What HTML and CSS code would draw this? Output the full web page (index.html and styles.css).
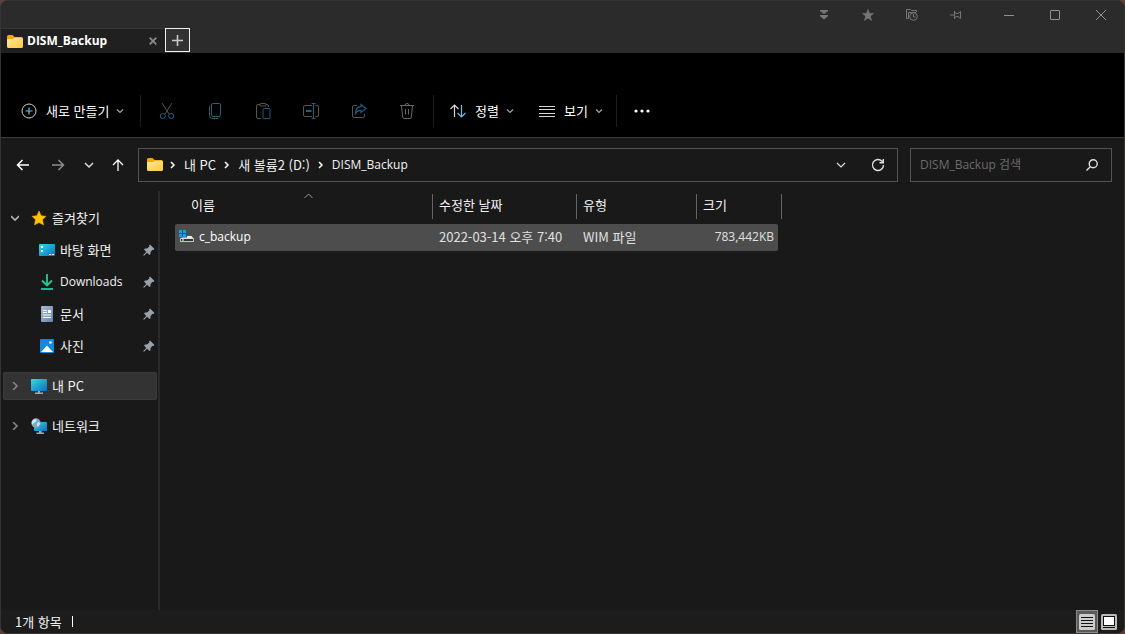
FILE: index.html
```
<!DOCTYPE html>
<html lang="ko">
<head>
<meta charset="utf-8">
<title>DISM_Backup</title>
<link rel="stylesheet" href="styles.css">
</head>
<body>
<svg class="defs" aria-hidden="true">
  <defs>
    <linearGradient id="gFolder" x1="0" y1="0" x2="1" y2="1"><stop offset="0" stop-color="#ffe8a0"/><stop offset="1" stop-color="#ffc93c"/></linearGradient>
    <linearGradient id="gScreen" x1="0" y1="0" x2="1" y2="1"><stop offset="0" stop-color="#35d8e6"/><stop offset="1" stop-color="#0a6fc4"/></linearGradient>
    <linearGradient id="gDoc" x1="0" y1="0" x2="1" y2="1"><stop offset="0" stop-color="#a9bdd4"/><stop offset="1" stop-color="#6484ab"/></linearGradient>
    <symbol id="folder" viewBox="0 0 16 13"><path d="M0 1.5Q0 0 1.5 0H5.5L7.5 2H14.5Q16 2 16 3.500V6H0Z" fill="#f5a800"/><path d="M0 5Q0 4 1 4H6L7.500 2.700H14.500Q16 2.700 16 4.200V11.500Q16 13 14.500 13H1.500Q0 13 0 11.500Z" fill="url(#gFolder)"/></symbol>
    <symbol id="chev" viewBox="0 0 8 8"><path d="M1 2.500L4 5.500L7 2.500" fill="none" stroke="currentColor" stroke-width="1.200"/></symbol>
    <symbol id="pin" viewBox="0 0 12 12"><path d="M7 .5L11.500 5L10.500 6L9.500 5.700L7.500 8V10L6.500 11L4 8.700L1 11.800L.2 11L3.300 8L1 5.500L2 4.500H4L6.400 2.500L6 1.500Z" fill="#9aa3a9"/></symbol>
  </defs>
</svg>
<div class="window">
  <header class="titlebar">
    <div class="tools">
      <button aria-label="더 보기"><svg width="10" height="12" viewBox="0 0 10 12"><path d="M1 1H9V2L5 5L1 2ZM1 6H9V7L5 10.500L1 7Z" fill="#777"/></svg></button>
      <button aria-label="즐겨찾기"><svg width="12" height="12" viewBox="0 0 12 12"><path d="M6 .5L7.500 4.500H11.500L8.300 7L9.500 11.500L6 9L2.500 11.500L3.700 7L.5 4.500H4.500Z" fill="#777" stroke="#777" stroke-width=".6"/></svg></button>
      <button aria-label="최근 폴더"><svg width="12" height="12" viewBox="0 0 12 12" fill="none" stroke="#777"><path d="M2.500 9.500H.5V.5H4.500L5.500 1.500H10.500V3"/><path d="M2.500 3.500H10"/><path d="M2.500 3.500V9.500"/><circle cx="7.500" cy="7.500" r="3.800"/><path d="M7.500 5V8H9.500"/></svg></button>
      <button aria-label="고정"><svg width="12" height="10" viewBox="0 0 12 10" fill="none" stroke="#777"><path d="M0 5H4M4.500 1V9M4.500 2.500L7 3.500H8L10.500 1.500V8.500L8 6.500H7L4.500 7.500"/></svg></button>
    </div>
    <div class="caption">
      <button aria-label="최소화"><svg width="10" height="12" viewBox="0 0 10 12"><path d="M0 6.500H10" stroke="#929292"/></svg></button>
      <button aria-label="최대화"><svg width="10" height="10" viewBox="0 0 10 10"><rect x=".5" y=".5" width="9" height="9" rx=".5" fill="none" stroke="#929292"/></svg></button>
      <button aria-label="닫기"><svg width="10" height="10" viewBox="0 0 10 10"><path d="M0 0L10 10M10 0L0 10" stroke="#929292"/></svg></button>
    </div>
  </header>
  <div class="tabs">
    <div class="tab">
      <svg width="16" height="13"><use href="#folder"/></svg>
      <span class="tab-title latin">DISM_Backup</span>
      <button class="tab-close" aria-label="탭 닫기"><svg width="8" height="8" viewBox="0 0 8 8"><path d="M.7 .7L7.300 7.300M7.300 .7L.7 7.300" stroke="#8c8c8c" stroke-width="1.800"/></svg></button>
    </div>
    <button class="tab-new" aria-label="새 탭"><svg width="11" height="11" viewBox="0 0 11 11"><path d="M5.500 0V11M0 5.500H11" stroke="#c9c9c9" stroke-width="1.600"/></svg></button>
  </div>
  <div class="ribbon">
    <button class="cmd cmd-new"><svg width="16" height="16" viewBox="0 0 16 16" fill="none"><circle cx="8" cy="8" r="7" stroke="#d0d0d0"/><path d="M8 4.500V11.500M4.500 8H11.500" stroke="#5cc0f5" stroke-width="1.200"/></svg><span>새로 만들기</span><svg class="drop" width="8" height="8"><use href="#chev"/></svg></button>
    <div class="ops">
      <button aria-label="잘라내기" disabled><svg width="16" height="16" viewBox="0 0 16 16" fill="none"><path d="M3 0L10 11M13 0L6 11" stroke="#555"/><circle cx="3.800" cy="13" r="2.500" stroke="#1f5f80"/><circle cx="12.200" cy="13" r="2.500" stroke="#1f5f80"/></svg></button>
      <button aria-label="복사" disabled><svg width="16" height="16" viewBox="0 0 16 16" fill="none"><path d="M3.500 2.500Q2.500 3 2.500 4.500V12.500Q2.500 15.500 5.500 15.500H10Q11.500 15.500 12 14.500" stroke="#555"/><rect x="4.500" y=".5" width="9" height="13" rx="1.500" stroke="#1f5f80"/></svg></button>
      <button aria-label="붙여넣기" disabled><svg width="16" height="16" viewBox="0 0 16 16" fill="none"><path d="M5 1.500H3Q1.500 1.500 1.500 3V14Q1.500 15.500 3 15.500H6M11 1.500H12Q13.500 1.500 13.500 3V4" stroke="#555"/><rect x="5" y=".5" width="6" height="2.500" rx="1" stroke="#555"/><rect x="8" y="5.500" width="7" height="10" rx="1" stroke="#1f5f80"/></svg></button>
      <button aria-label="이름 바꾸기" disabled><svg width="16" height="16" viewBox="0 0 16 16" fill="none"><path d="M9 2.500H2Q.5 2.500 .5 4V12Q.5 13.500 2 13.500H9M12.500 2.500H14Q15.500 2.500 15.500 4V12Q15.500 13.500 14 13.500H12.500" stroke="#555"/><path d="M3 8H8.500" stroke="#1f5f80" stroke-width="2"/><path d="M8.500 .5H12.500M8.500 15.500H12.500M10.500 .5V15.500" stroke="#1f5f80"/></svg></button>
      <button aria-label="공유" disabled><svg width="16" height="16" viewBox="0 0 16 16" fill="none"><path d="M6 2.500H3Q1.500 2.500 1.500 4V13Q1.500 14.500 3 14.500H12Q13.500 14.500 13.500 13V11" stroke="#555"/><path d="M10 1.500L15 5.500L10 9.500V7.500Q6.500 7 4.500 10.500Q4.500 4 10 3.700Z" stroke="#1f5f80" stroke-width="1.200"/></svg></button>
      <button aria-label="삭제" disabled><svg width="16" height="16" viewBox="0 0 16 16" fill="none" stroke="#686868"><path d="M1 2.500H15M6 2.500Q6 .5 8 .5Q10 .5 10 2.500M2.500 2.500L3.700 14Q3.900 15.500 5 15.500H11Q12.100 15.500 12.300 14L13.500 2.500M6.500 6V11.500M9.500 6V11.500"/></svg></button>
    </div>
    <button class="cmd cmd-sort"><svg width="16" height="14" viewBox="0 0 16 14" fill="none"><path d="M4.500 13V1M.5 5L4.500 1L8.500 5" stroke="#d6d6d6" stroke-width="1.200"/><path d="M11.500 1V13M7.500 9L11.500 13L15.500 9" stroke="#5cc0f5" stroke-width="1.200"/></svg><span>정렬</span><svg class="drop" width="8" height="8"><use href="#chev"/></svg></button>
    <button class="cmd cmd-view"><svg width="16" height="11" viewBox="0 0 16 11"><path d="M0 .5H16M0 3.500H16M0 7.500H16M0 10.500H16" stroke="#d8d8d8"/></svg><span>보기</span><svg class="drop" width="8" height="8"><use href="#chev"/></svg></button>
    <button class="more" aria-label="자세히"><svg width="16" height="4" viewBox="0 0 16 4" fill="#fff"><circle cx="2" cy="2" r="1.600"/><circle cx="8" cy="2" r="1.600"/><circle cx="14" cy="2" r="1.600"/></svg></button>
  </div>
  <nav class="navbar">
    <div class="history">
      <button aria-label="뒤로"><svg width="14" height="12" viewBox="0 0 14 12" fill="none" stroke="#fff" stroke-width="1.500"><path d="M13 6H1.500M6.500 1L1.500 6L6.500 11"/></svg></button>
      <button aria-label="앞으로"><svg width="14" height="12" viewBox="0 0 14 12" fill="none" stroke="#8d8d8d" stroke-width="1.500"><path d="M1 6H12.500M7.500 1L12.500 6L7.500 11"/></svg></button>
      <button class="recent" aria-label="최근 위치"><svg width="10" height="8" viewBox="0 0 10 8" fill="none" stroke="#ddd" stroke-width="1.500"><path d="M1 2L5 6L9 2"/></svg></button>
      <button class="up" aria-label="위로"><svg width="12" height="12" viewBox="0 0 12 12" fill="none" stroke="#fff" stroke-width="1.300"><path d="M6 12V1M1 6L6 1L11 6"/></svg></button>
    </div>
    <div class="address">
      <svg width="16" height="13"><use href="#folder"/></svg>
      <svg class="sep" width="6" height="8" viewBox="0 0 6 8"><path d="M1 1L4 4L1 7" fill="none" stroke="#fff" stroke-width="1.500"/></svg>
      <a href="#">내 PC</a>
      <svg class="sep" width="6" height="8" viewBox="0 0 6 8"><path d="M1 1L4 4L1 7" fill="none" stroke="#fff" stroke-width="1.500"/></svg>
      <a href="#">새 볼륨2 (D:)</a>
      <svg class="sep" width="6" height="8" viewBox="0 0 6 8"><path d="M1 1L4 4L1 7" fill="none" stroke="#fff" stroke-width="1.500"/></svg>
      <a class="latin" href="#">DISM_Backup</a>
      <button class="addr-drop" aria-label="이전 위치"><svg width="10" height="8" viewBox="0 0 10 8" fill="none" stroke="#ddd" stroke-width="1.200"><path d="M1 2L5 6L9 2"/></svg></button>
      <button aria-label="새로 고침"><svg width="14" height="14" viewBox="0 0 14 14" fill="none" stroke="#ddd" stroke-width="1.400"><path d="M12.500 7A5.500 5.500 0 1 1 11 3.200L12 4.300M12.300 1V4.700H8.500"/></svg></button>
    </div>
    <form class="search">
      <input class="latin" type="text" aria-label="DISM_Backup 검색" placeholder="DISM_Backup 검색">
      <button type="button" aria-label="검색"><svg width="12" height="12" viewBox="0 0 12 12" fill="none" stroke="#e0e0e0" stroke-width="1.400"><circle cx="7.200" cy="4.800" r="4"/><path d="M4.300 7.700L.5 11.500"/></svg></button>
    </form>
  </nav>
  <div class="body">
    <aside class="sidebar">
      <div class="group">
        <a class="item" href="#"><svg class="arrow open" width="8" height="8" viewBox="0 0 8 8"><path d="M2 0L6 4L2 8" fill="none" stroke="currentColor" stroke-width="1.600"/></svg><svg width="16" height="16" viewBox="0 0 16 16"><path d="M8 1L10.200 5.800L15 6.300L11.500 9.800L12.500 15L8 12.500L3.500 15L4.500 9.800L1 6.300L5.800 5.800Z" fill="#ffc400" stroke="#f5a800" stroke-width=".6"/></svg><span>즐겨찾기</span></a>
        <a class="item sub" href="#"><svg width="16" height="16" viewBox="0 0 16 16"><rect y="2" width="16" height="12" rx="1" fill="url(#gScreen)"/><path d="M2 4H4V6H2ZM2 8H4V10H2ZM10 12H12V13H10ZM13 12H15V13H13Z" fill="#fff"/></svg><span>바탕 화면</span><svg class="pin" width="12" height="12"><use href="#pin"/></svg></a>
        <a class="item sub" href="#"><svg width="16" height="16" viewBox="0 0 16 16" fill="none" stroke="#2cc894" stroke-width="1.800"><path d="M8 0V11M3 6.500L8 11.500L13 6.500"/><path d="M2 14H14V16H2Z" fill="#1cb898" stroke="none"/></svg><span class="latin">Downloads</span><svg class="pin" width="12" height="12"><use href="#pin"/></svg></a>
        <a class="item sub" href="#"><svg width="16" height="16" viewBox="0 0 16 16"><rect x="2" width="12" height="16" rx="1" fill="url(#gDoc)"/><path d="M4 4H8V5H4ZM4 6H8V7H4ZM9 4H12V7H9ZM4 8.500H12V9.500H4ZM4 11H12V12H4Z" fill="#fff"/></svg><span>문서</span><svg class="pin" width="12" height="12"><use href="#pin"/></svg></a>
        <a class="item sub" href="#"><svg width="16" height="16" viewBox="0 0 16 16"><rect x="1" y="1" width="14" height="14" rx="1" fill="#1289dc"/><path d="M2 14L8 7.500L14 14Z" fill="#fff"/><circle cx="11.500" cy="4.500" r="1.300" fill="#fff"/></svg><span>사진</span><svg class="pin" width="12" height="12"><use href="#pin"/></svg></a>
      </div>
      <a class="item selected" href="#"><svg class="arrow" width="8" height="8" viewBox="0 0 8 8"><path d="M2 0L6 4L2 8" fill="none" stroke="currentColor" stroke-width="1.600"/></svg><svg width="16" height="16" viewBox="0 0 16 16"><rect y="1" width="16" height="12" rx=".7" fill="url(#gScreen)"/><path d="M7 13H9V14.500H12V16H4V14.500H7Z" fill="#a0aab3"/></svg><span>내 PC</span></a>
      <a class="item" href="#"><svg class="arrow" width="8" height="8" viewBox="0 0 8 8"><path d="M2 0L6 4L2 8" fill="none" stroke="currentColor" stroke-width="1.600"/></svg><svg width="16" height="16" viewBox="0 0 16 16"><rect x="3" y="4" width="13" height="9" rx=".7" fill="url(#gScreen)"/><path d="M8 13H10.500V14.500H13V16H5.500V14.500H8Z" fill="#a0aab3"/><circle cx="5" cy="5" r="4.700" fill="#7da7c6"/><path d="M1.500 2.500Q4 0 5.500 1.500Q6 3.500 3.500 4.500Q2 5 1.500 7Q0 5 1.500 2.500ZM7 4Q9 4 9 6Q8 8 6 8.500Q5.500 6 7 4Z" fill="#d5e9f5"/></svg><span>네트워크</span></a>
    </aside>
    <main class="files">
      <table>
        <thead>
          <tr><th class="c-name">이름<svg class="sorted" width="9" height="6" viewBox="0 0 9 6"><path d="M.5 5L4.500 1L8.500 5" fill="none" stroke="#999"/></svg></th><th class="c-date">수정한 날짜</th><th class="c-type">유형</th><th class="c-size">크기</th></tr>
        </thead>
        <tbody>
          <tr><td><div class="file"><svg width="15" height="14" viewBox="0 0 15 14"><path d="M0 0H3V3H0ZM4 0H7V3H4ZM0 4H3V7H0ZM4 4H7V7H4Z" fill="#1c9bea"/><path d="M8 6H12.500L15 9H1L3 7.500H8Z" fill="#efefef"/><rect x="1" y="8.500" width="14" height="3.500" fill="#c4c4c4"/><rect x="2" y="9" width="12" height="2" fill="#333"/><rect x="3" y="9" width="2" height="2" fill="#46d35a"/></svg><span class="latin">c_backup</span></div></td><td>2022-03-14 오후 7:40</td><td>WIM 파일</td><td class="num latin">783,442KB</td></tr>
        </tbody>
      </table>
    </main>
  </div>
  <footer class="status">
    <span class="count">1개 항목</span>
    <div class="views">
      <button class="active" aria-label="자세히 보기"><svg width="16" height="16" viewBox="0 0 16 16"><rect width="16" height="16" rx="1.500" fill="#ccc"/><path d="M2 3.500H14M2 6.500H14M2 9.500H14M2 12.500H14" stroke="#111"/></svg></button>
      <button aria-label="큰 아이콘 보기"><svg width="16" height="16" viewBox="0 0 16 16"><rect width="16" height="16" rx="1.500" fill="#bbb"/><rect x="2.500" y="2.500" width="11" height="9" fill="#fff" stroke="#111"/><path d="M2 13.500H14" stroke="#111"/></svg></button>
    </div>
  </footer>
</div>
</body>
</html>
```
FILE: styles.css
```
* { box-sizing: border-box; }
body {
  margin: 0;
  background: #5a4038;
  color: #f2f2f2;
  font: 13px/20px "Noto Sans CJK KR", sans-serif;
}
button {
  display: flex;
  align-items: center;
  justify-content: center;
  padding: 0;
  border: 0;
  background: none;
  color: inherit;
  font: inherit;
}
svg { flex: none; display: block; }
a { color: inherit; text-decoration: none; }
.defs { position: absolute; width: 0; height: 0; }
.latin { font: 12px/20px "Open Sans", "Noto Sans CJK KR", sans-serif; }

.window {
  display: flex;
  flex-direction: column;
  height: 100vh;
  border: 1px solid #363433;
  border-radius: 8px;
  background: #191919;
  overflow: hidden;
}

.titlebar {
  display: flex;
  justify-content: flex-end;
  height: 27px;
  background: #2b2b2b;
}
.tools, .caption { display: flex; }
.tools button { width: 44px; }
.caption button { width: 46px; }
.tools { margin-right: 8px; }

.tabs { display: flex; height: 25px; background: #2b2b2b; }
.tab {
  display: flex;
  align-items: center;
  gap: 4px;
  width: 164px;
  padding: 0 8px 0 6px;
  border-top: 1px solid #363636;
  background: #202020;
}
.tab-title { flex: 1; color: #fff; font-weight: 700; }
.tab-new {
  width: 25px;
  height: 24px;
  border: 1px solid #f0f0f0;
  background: #333;
}

.ribbon {
  display: flex;
  align-items: center;
  height: 84px;
  padding: 32px 0 0 20px;
  background: #000;
}
.cmd { gap: 9px; justify-content: flex-start; height: 32px; white-space: nowrap; color: #fff; }
.drop { margin-left: -2px; color: #a5a5a5; }
.cmd-new { width: 119px; }
.ops {
  display: flex;
  width: 294px;
  height: 32px;
  padding-left: 2px;
  border: solid #1d1d1d;
  border-width: 0 1px;
}
.ops button { width: 48px; }
.cmd-sort { width: 105px; padding-left: 16px; }
.cmd-view { width: 77px; }
.more { width: 50px; height: 32px; border-left: 1px solid #1d1d1d; }

.navbar {
  display: flex;
  align-items: center;
  gap: 12px;
  height: 54px;
  padding: 0 12px 0 4px;
  border-top: 1px solid #3c3c3c;
}
.history { display: flex; width: 121px; }
.history button { flex: none; width: 35px; height: 32px; }
.history .recent { width: 28px; }
.history .up { width: 30px; }
.address, .search {
  display: flex;
  align-items: center;
  height: 34px;
  border: 1px solid #535353;
}
.address { flex: 1; padding: 0 6px 0 8px; }
.sep { margin: 0 8px 0 7px; }
.address a:not(:last-of-type) { margin-right: 1px; }
.address button { width: 26px; height: 28px; }
.address .addr-drop { width: 48px; margin-left: auto; }
.search { width: 202px; padding: 0 10px 0 9px; }
.search input {
  flex: 1;
  min-width: 0;
  padding: 0;
  border: 0;
  outline: 0;
  background: none;
  color: #fff;
}
.search input::placeholder { color: #6b6b6b; }
.search button { width: 18px; height: 28px; }

.body { flex: 1; display: flex; min-height: 0; }
.sidebar {
  display: flex;
  flex-direction: column;
  gap: 12px;
  width: 159px;
  padding: 13px 1px 0 2px;
  border-right: 2px solid #2a2a2a;
}
.group { display: flex; flex-direction: column; gap: 4px; }
.item {
  display: flex;
  align-items: center;
  gap: 5px;
  height: 28px;
  padding: 0 2px 0 8px;
}
.item.sub { padding-left: 36px; }
.item.selected { border: 1px solid #3b3b3b; padding: 0 1px 0 7px; background: #333; border-radius: 2px; }
.arrow { margin-right: 7px; color: #848484; }
.arrow.open { transform: rotate(90deg); color: #b5b5b5; }
.pin { margin-left: auto; }

.files { flex: 1; padding-left: 15px; }
table { width: 603px; border-collapse: collapse; table-layout: fixed; }
th, td { padding: 0 4px 0 6px; text-align: left; font-weight: 400; white-space: nowrap; }
th { position: relative; height: 33px; padding-bottom: 6px; }
th::after {
  content: "";
  position: absolute;
  top: 3px;
  right: 0;
  width: 1px;
  height: 25px;
  background: #646464;
}
.c-name { width: 258px; padding-left: 16px; }
.c-date { width: 144px; }
.c-type { width: 120px; }
.c-size::after { right: -4px; }
.sorted { position: absolute; top: 2px; left: 50%; }
td { height: 27px; padding-bottom: 2px; background: #4d4d4d; color: #e0e0e0; }
td:first-child { padding-left: 4px; border-radius: 2px 0 0 2px; }
td:last-child { border-radius: 0 2px 2px 0; }
.num { text-align: right; }
.file { display: flex; align-items: center; gap: 5px; color: #fff; }

.status {
  display: flex;
  align-items: center;
  justify-content: space-between;
  height: 23px;
  padding: 0 4px 0 14px;
  background: #1c1c1c;
}
.count { display: flex; align-items: center; gap: 10px; }
.count::after { content: ""; width: 1px; height: 11px; background: #fff; }
.views { display: flex; }
.views button { width: 22px; height: 23px; }
.views .active { border: 1px solid #8a8a8a; background: #5a5a5a; }
```
